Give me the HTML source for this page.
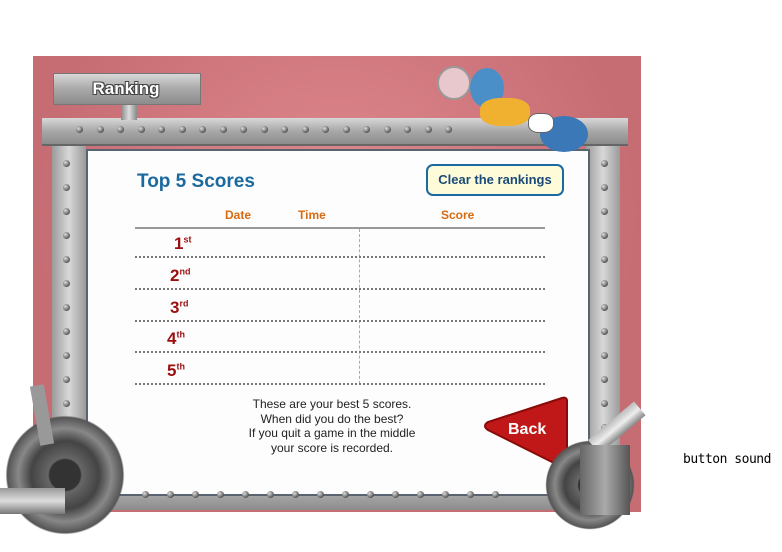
<!DOCTYPE html>
<html><head><style>
body{margin:0;width:782px;height:552px;background:#fff;position:relative;overflow:hidden;font-family:"Liberation Sans",sans-serif}
.a{position:absolute}
.bg{left:33px;top:56px;width:608px;height:456px;background:radial-gradient(ellipse at 50% 35%,#e08a8f,#c66d74 70%)}
.metal{background:linear-gradient(#d8d8d8,#a8a8a8 50%,#8c8c8c)}
.vmetal{background:linear-gradient(90deg,#9a9a9a,#d8d8d8 50%,#9a9a9a)}
.r{position:absolute;width:7px;height:7px;border-radius:50%;background:radial-gradient(circle at 35% 35%,#ddd,#555 70%)}
.panel{left:86px;top:149px;width:500px;height:343px;background:#fdfdfd;border:2px solid #5a6470}
.rank{color:#9a1010;font-weight:bold;font-size:17px}
.rank sup{font-size:9px}
.dot{left:135px;width:410px;border-top:2px dotted #777}
.gear{border-radius:50%;background:radial-gradient(circle,#333 18%,#666 20%,#444 40%,#888 55%,#555 68%,transparent 70%)}
</style></head><body>
<div class="a bg"></div>
<div class="a vmetal" style="left:52px;top:135px;width:34px;height:370px"></div>
<div class="a vmetal" style="left:586px;top:135px;width:34px;height:370px"></div>
<div class="a metal" style="left:110px;top:478px;width:470px;height:32px"></div>
<div class="a panel"></div>
<div class="a metal" style="left:42px;top:118px;width:586px;height:26px;border-bottom:2px solid #666"></div>
<div id="rivets"></div>
<div class="a" style="left:121px;top:100px;width:16px;height:20px;background:linear-gradient(90deg,#888,#ddd,#888)"></div>
<div class="a metal" style="left:53px;top:73px;width:146px;height:30px;border:1px solid #777"></div>
<div class="a" style="left:53px;top:79px;width:146px;text-align:center;font-size:17px;font-weight:bold;color:#fff;text-shadow:1px 1px 0 #444,-1px -1px 0 #444,1px -1px 0 #444,-1px 1px 0 #444">Ranking</div>
<div class="a" style="left:437px;top:66px;width:30px;height:30px;border-radius:50%;background:#e8c8cc;border:2px solid #999"></div>
<div class="a" style="left:470px;top:68px;width:34px;height:40px;border-radius:50%;background:#4a8fc8"></div>
<div class="a" style="left:480px;top:98px;width:50px;height:28px;border-radius:40%;background:#f0b030"></div>
<div class="a" style="left:540px;top:116px;width:48px;height:36px;border-radius:50%;background:#3a78b8"></div>
<div class="a" style="left:528px;top:113px;width:24px;height:18px;border-radius:40%;background:#fff;border:1px solid #666"></div>
<div class="a" style="left:137px;top:171px;font-size:19px;font-weight:bold;color:#1a6aa0">Top 5 Scores</div>
<div class="a" style="left:426px;top:164px;width:134px;height:28px;border:2px solid #1a6aa0;border-radius:7px;background:#fdfbd8;font-size:13px;font-weight:bold;color:#1a4a7a;text-align:center;line-height:28px">Clear the rankings</div>
<div class="a" style="left:225px;top:208px;font-size:12px;font-weight:bold;color:#d86a10">Date</div>
<div class="a" style="left:298px;top:208px;font-size:12px;font-weight:bold;color:#d86a10">Time</div>
<div class="a" style="left:441px;top:208px;font-size:12px;font-weight:bold;color:#d86a10">Score</div>
<div class="a" style="left:135px;top:227px;width:410px;border-top:2px solid #999"></div>
<div class="a" style="left:359px;top:229px;height:155px;border-left:1px dashed #aaa"></div>
<div class="a dot" style="top:256px"></div>
<div class="a dot" style="top:288px"></div>
<div class="a dot" style="top:320px"></div>
<div class="a dot" style="top:351px"></div>
<div class="a dot" style="top:383px"></div>
<div class="a rank" style="left:174px;top:234px">1<sup>st</sup></div>
<div class="a rank" style="left:170px;top:266px">2<sup>nd</sup></div>
<div class="a rank" style="left:170px;top:298px">3<sup>rd</sup></div>
<div class="a rank" style="left:167px;top:329px">4<sup>th</sup></div>
<div class="a rank" style="left:167px;top:361px">5<sup>th</sup></div>
<div class="a" style="left:220px;top:397px;width:224px;text-align:center;font-size:12px;line-height:14.5px;color:#222">These are your best 5 scores.<br>When did you do the best?<br>If you quit a game in the middle<br>your score is recorded.</div>
<svg class="a" style="left:482px;top:394px" width="86" height="78"><path d="M80 4 Q86 2 85 10 L85 68 Q85 76 78 72 L6 36 Q0 32 6 28 Z" fill="#c01818" stroke="#8a0a0a" stroke-width="2"/><text x="26" y="40" font-family="Liberation Sans" font-weight="bold" font-size="16" fill="#fff">Back</text></svg>
<div class="a gear" style="left:5px;top:415px;width:120px;height:120px"></div>
<div class="a" style="left:0;top:488px;width:65px;height:26px;background:linear-gradient(#999,#ddd,#777)"></div>
<div class="a" style="left:35px;top:385px;width:14px;height:60px;background:#999;transform:rotate(-10deg)"></div>
<div class="a gear" style="left:545px;top:440px;width:90px;height:90px"></div>
<div class="a" style="width:60px;height:18px;background:linear-gradient(#bbb,#eee,#888);transform:rotate(-40deg);transform-origin:0 0;top:440px;left:588px"></div>
<div class="a" style="left:580px;top:445px;width:50px;height:70px;background:linear-gradient(90deg,#666,#aaa,#555)"></div>
<div class="a" style="left:683px;top:452px;font-family:'DejaVu Sans Mono',monospace;font-size:13px;color:#000;white-space:nowrap;letter-spacing:-0.5px">button sound</div>
<script>
var h='';
for(var i=0;i<19;i++){h+='<div class="r" style="left:'+(76+i*20.5)+'px;top:126px"></div>';}
for(var j=0;j<14;j++){h+='<div class="r" style="left:63px;top:'+(160+j*24)+'px"></div><div class="r" style="left:601px;top:'+(160+j*24)+'px"></div>';}
for(var k=0;k<15;k++){h+='<div class="r" style="left:'+(142+k*25)+'px;top:491px"></div>';}
document.getElementById('rivets').innerHTML=h;
</script>
</body></html>
